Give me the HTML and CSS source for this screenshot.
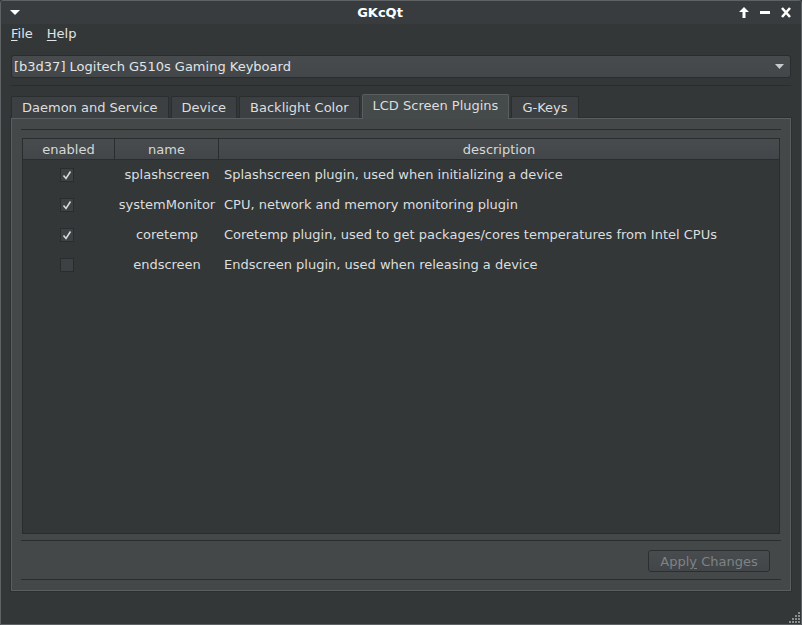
FILE: index.html
```html
<!DOCTYPE html>
<html>
<head>
<meta charset="utf-8">
<link rel="stylesheet" href="styles.css">
</head>
<body>
<div class="window">
  <div class="titlebar">
    <div class="tb-left">
      <svg width="10" height="6" viewBox="0 0 10 6"><polygon points="0,0 10,0 5,5" fill="#ffffff"/></svg>
    </div>
    <div class="tb-title">GKcQt</div>
    <div class="tb-right">
      <svg class="tb-btn" width="10" height="11" viewBox="0 0 10 11"><polygon points="5,0 10,5 6.5,5 6.5,11 3.5,11 3.5,5 0,5" fill="#ffffff"/></svg>
      <svg class="tb-btn" width="10" height="11" viewBox="0 0 10 11"><rect x="0" y="4" width="10" height="3" fill="#ffffff"/></svg>
      <svg class="tb-btn" width="10" height="11" viewBox="0 0 10 11"><path d="M1,1 L9,10 M9,1 L1,10" stroke="#ffffff" stroke-width="2.6" fill="none"/></svg>
    </div>
  </div>
  <div class="menubar">
    <span class="menu-item"><u>F</u>ile</span>
    <span class="menu-item"><u>H</u>elp</span>
  </div>
  <div class="main">
    <div class="combo">
      <span class="combo-text">[b3d37] Logitech G510s Gaming Keyboard</span>
      <svg width="9" height="5" viewBox="0 0 9 5"><polygon points="0,0 9,0 4.5,5" fill="#c8cacb"/></svg>
    </div>
    <div class="hsep top-sep"></div>
    <div class="tabbar">
      <div class="tab">Daemon and Service</div>
      <div class="tab">Device</div>
      <div class="tab">Backlight Color</div>
      <div class="tab selected">LCD Screen Plugins</div>
      <div class="tab">G-Keys</div>
    </div>
    <div class="pane">
      <div class="hsep pane-sep1"></div>
      <div class="table">
        <div class="thead">
          <div class="th c1">enabled</div>
          <div class="th c2">name</div>
          <div class="th c3">description</div>
        </div>
        <div class="row">
          <div class="td c1"><span class="check on"><svg width="10" height="10" viewBox="0 0 10 10"><path d="M1.5,5.5 L4,8.5 L8.5,1.5" stroke="#d6d8d9" stroke-width="1.6" fill="none"/></svg></span></div>
          <div class="td c2">splashscreen</div>
          <div class="td c3">Splashscreen plugin, used when initializing a device</div>
        </div>
        <div class="row">
          <div class="td c1"><span class="check on"><svg width="10" height="10" viewBox="0 0 10 10"><path d="M1.5,5.5 L4,8.5 L8.5,1.5" stroke="#d6d8d9" stroke-width="1.6" fill="none"/></svg></span></div>
          <div class="td c2">systemMonitor</div>
          <div class="td c3">CPU, network and memory monitoring plugin</div>
        </div>
        <div class="row">
          <div class="td c1"><span class="check on"><svg width="10" height="10" viewBox="0 0 10 10"><path d="M1.5,5.5 L4,8.5 L8.5,1.5" stroke="#d6d8d9" stroke-width="1.6" fill="none"/></svg></span></div>
          <div class="td c2">coretemp</div>
          <div class="td c3">Coretemp plugin, used to get packages/cores temperatures from Intel CPUs</div>
        </div>
        <div class="row">
          <div class="td c1"><span class="check"></span></div>
          <div class="td c2">endscreen</div>
          <div class="td c3">Endscreen plugin, used when releasing a device</div>
        </div>
      </div>
      <div class="hsep pane-sep2"></div>
      <div class="btnrow">
        <div class="button disabled"><span>Appl<u>y</u> Changes</span></div>
      </div>
      <div class="hsep pane-sep3"></div>
    </div>
  </div>
  <div class="grip">
    <svg width="12" height="12" viewBox="0 0 12 12" fill="#8a8e90">
      <rect x="10" y="1" width="2" height="2"/>
      <rect x="7" y="4" width="2" height="2"/><rect x="10" y="4" width="2" height="2"/>
      <rect x="4" y="7" width="2" height="2"/><rect x="7" y="7" width="2" height="2"/><rect x="10" y="7" width="2" height="2"/>
      <rect x="1" y="10" width="2" height="2"/><rect x="4" y="10" width="2" height="2"/><rect x="7" y="10" width="2" height="2"/><rect x="10" y="10" width="2" height="2"/>
    </svg>
  </div>
</div>
</body>
</html>
```
FILE: styles.css
```css
* { box-sizing: border-box; }
html, body { margin: 0; padding: 0; }
body {
  background: #333738;
  font-family: "DejaVu Sans", "Liberation Sans", sans-serif;
  font-size: 13px;
  color: #dcdedf;
}
.window {
  position: relative;
  width: 802px;
  height: 625px;
  border: 1px solid #5e6264;
  border-radius: 3px 3px 0 0;
  background: #333738;
  display: flex;
  flex-direction: column;
  overflow: hidden;
}
.titlebar {
  height: 23px;
  flex: none;
  display: flex;
  align-items: center;
  background: #383c3e;
}
.tb-left {
  width: 40px;
  flex: none;
  padding-left: 9px;
  display: flex;
  align-items: center;
}
.tb-title {
  flex: 1;
  text-align: center;
  color: #ffffff;
  font-weight: bold;
  font-size: 13px;
}
.tb-right {
  width: 82px;
  flex: none;
  display: flex;
  align-items: center;
  justify-content: flex-end;
  gap: 11px;
  padding-right: 10px;
}
.tb-btn { display: block; }
.menubar {
  height: 20px;
  flex: none;
  display: flex;
  align-items: center;
  padding-left: 10px;
  gap: 14px;
  color: #e2e4e5;
  padding-bottom: 1px;
}
.menu-item u { text-decoration-thickness: 1px; text-underline-offset: 2px; }
.main {
  padding: 11px 10px 0 10px;
  display: flex;
  flex-direction: column;
}
.combo {
  height: 23px;
  border: 1px solid #2a2d2e;
  border-radius: 3px;
  background: linear-gradient(#474b4d, #434749);
  display: flex;
  align-items: center;
  justify-content: space-between;
  padding: 0 6px 0 2px;
  color: #e2e4e5;
}
.hsep {
  height: 1px;
  background: #2a2d2e;
}
.top-sep { margin-top: 7px; }
.tabbar {
  margin-top: 8px;
  height: 24px;
  display: flex;
  align-items: flex-end;
  gap: 2px;
  position: relative;
  z-index: 1;
}
.tab {
  height: 22px;
  padding: 0 10px;
  display: flex;
  align-items: center;
  background: #3c4042;
  border: 1px solid #2b2e2f;
  border-bottom: none;
  border-radius: 2px 2px 0 0;
  color: #dcdedf;
}
.tab.selected {
  height: 25px;
  margin-bottom: -1px;
  background: #454a4b;
  border-color: #5a5e60;
  padding-bottom: 3px;
}
.pane {
  height: 473px;
  border: 1px solid #5a5e60;
  background: #444849;
  padding: 10px 9px 0 9px;
  display: flex;
  flex-direction: column;
  box-shadow: 0 0 0 1px #2d3031;
}
.table {
  margin: 8px 1px 0 1px;
  height: 396px;
  border: 1px solid #2a2d2e;
  background: #333738;
  display: flex;
  flex-direction: column;
}
.thead {
  height: 21px;
  flex: none;
  display: flex;
  background: linear-gradient(#484c4e, #424648);
  border-bottom: 1px solid #2a2d2e;
  color: #d6d8d9;
}
.th {
  display: flex;
  align-items: center;
  justify-content: center;
  border-right: 1px solid #2a2d2e;
}
.th.c3 { border-right: none; }
.c1 { width: 92px; flex: none; }
.c2 { width: 104px; flex: none; }
.c3 { flex: 1; }
.row {
  height: 30px;
  flex: none;
  display: flex;
  align-items: center;
  padding-bottom: 1px;
}
.td.c1 { padding-left: 37px; display: flex; align-items: center; }
.td.c2 { text-align: center; }
.td.c3 { padding-left: 5px; white-space: nowrap; }
.check {
  width: 14px;
  height: 14px;
  border: 1px solid #2a2d2e;
  background: #3d4143;
  display: flex;
  align-items: center;
  justify-content: center;
}
.pane-sep2 { margin-top: 6px; }
.btnrow {
  margin-top: 9px;
  display: flex;
  justify-content: flex-end;
  padding-right: 11px;
}
.button {
  width: 122px;
  height: 22px;
  border: 1px solid #2c2f30;
  border-radius: 3px;
  background: linear-gradient(#484c4e, #424648);
  display: flex;
  align-items: center;
  justify-content: center;
  color: #7f8385;
}
.button u { text-decoration-thickness: 1px; text-underline-offset: 2px; }
.pane-sep3 { margin-top: 7px; }
.grip {
  position: absolute;
  right: 1px;
  bottom: 1px;
  line-height: 0;
}
```
